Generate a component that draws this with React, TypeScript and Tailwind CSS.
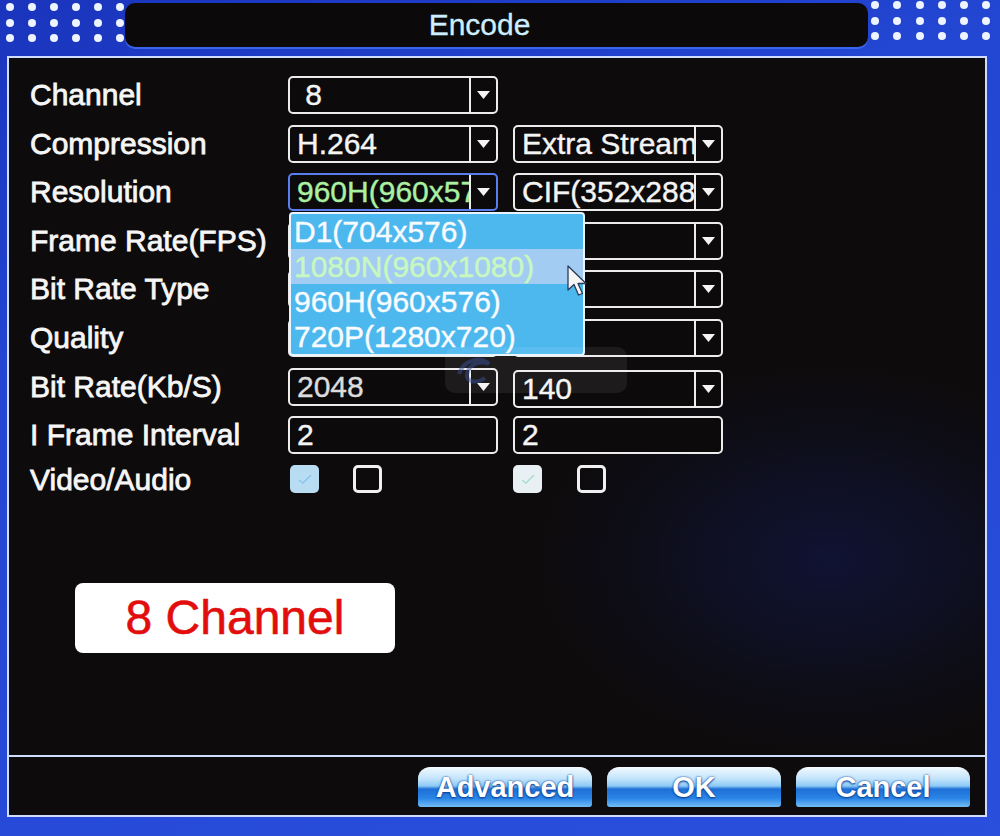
import React from "react";

const labels = [
  "Channel",
  "Compression",
  "Resolution",
  "Frame Rate(FPS)",
  "Bit Rate Type",
  "Quality",
  "Bit Rate(Kb/S)",
  "I Frame Interval",
  "Video/Audio",
];

const resolutions = ["D1(704x576)", "1080N(960x1080)", "960H(960x576)", "720P(1280x720)"];

function Dots({ className = "" }: { className?: string }) {
  return (
    <div className={`grid grid-cols-6 gap-x-[13.6px] gap-y-[7.5px] ${className}`}>
      {Array.from({ length: 18 }).map((_, i) => (
        <span key={i} className="h-[8px] w-[8px] rounded-full bg-[#eef4ff]" />
      ))}
    </div>
  );
}

function Arrow() {
  return (
    <svg width="13" height="8" viewBox="0 0 13 8">
      <path d="M0 0H13L6.5 8Z" fill="#f4f4f4" />
    </svg>
  );
}

function Select({
  value = "",
  text = "text-[#f4f4f4]",
  border = "border-[#ececec]",
}: {
  value?: string;
  text?: string;
  border?: string;
}) {
  return (
    <div className={`flex h-[38px] w-[210px] overflow-hidden rounded-[5px] border-2 ${border} bg-[#0c0a0a]`}>
      <div className={`flex-1 overflow-hidden whitespace-pre pl-[7px] text-[30px] leading-[34px] [-webkit-text-stroke:0.4px_currentColor] ${text}`}>
        {value}
      </div>
      <div className="flex w-[27px] shrink-0 items-center justify-center border-l-2 border-[#ececec]">
        <Arrow />
      </div>
    </div>
  );
}

function Field({ value }: { value: string }) {
  return (
    <div className="h-[38px] w-[210px] overflow-hidden rounded-[5px] border-2 border-[#ececec] bg-[#0c0a0a] pl-[7px] text-[30px] leading-[34px] text-[#f4f4f4] [-webkit-text-stroke:0.4px_currentColor]">
      {value}
    </div>
  );
}

function Check({ fill, tick }: { fill?: string; tick?: string }) {
  if (fill) {
    return (
      <span className={`flex h-[28px] w-[29px] items-center justify-center rounded-[5px] ${fill}`}>
        <svg width="16" height="12" viewBox="0 0 16 12">
          <path d="M2 7L6 10L14 2" fill="none" stroke={tick} strokeWidth="1.4" />
        </svg>
      </span>
    );
  }
  return <span className="h-[28px] w-[29px] rounded-[5px] border-[3px] border-[#f0f0f0]" />;
}

function Button({ children }: { children: React.ReactNode }) {
  return (
    <button className="flex h-[40px] w-[174px] items-center justify-center rounded-t-[12px] rounded-b-[3px] border-t border-[#f4faff] bg-[linear-gradient(180deg,#eef8ff_0%,#c2e3fb_28%,#8ccaf6_46%,#1e6fd6_54%,#2b86e6_78%,#74bdf6_100%)] text-[29px] font-bold leading-none text-white [text-shadow:0_0_2px_#0a3f95,0_1px_2px_#0a3f95]">
      {children}
    </button>
  );
}

function Cursor() {
  return (
    <svg width="24" height="34" viewBox="0 0 24 34">
      <path
        d="M1 1L1 25L7 19.5L11.5 30L15.5 28.5L11 18.5L19 18.5Z"
        fill="#f6f6f6"
        stroke="#2a3a5a"
        strokeWidth="1.3"
        strokeLinejoin="round"
      />
    </svg>
  );
}

export default function App() {
  return (
    <div className="relative h-[836px] w-[1000px] overflow-hidden bg-[linear-gradient(160deg,#1a34bc_0%,#2245d2_30%,#2a4fdc_100%)] font-['Liberation_Sans',Arial,sans-serif] text-white">
      <header className="flex h-[56px] items-start">
        <Dots className="ml-[6px] mt-[3px] w-[119px]" />
        <div className="mt-[3px] flex h-[44px] w-[743px] items-center justify-center rounded-[10px] bg-[#0b0909] pr-[34px] text-[30px] leading-none text-[#cdeeff] shadow-[0_2px_0_#3a66ee] [-webkit-text-stroke:0.3px_#cdeeff]">
          Encode
        </div>
        <Dots className="ml-[3px] mt-[1px] w-[120px]" />
      </header>

      <main className="ml-[7px] flex h-[761px] w-[980px] flex-col border-2 border-[#cfdcfb] bg-[#0d0b0b]">
        <section className="relative flex-1 bg-[radial-gradient(ellipse_30%_28%_at_84%_72%,#101333_0%,rgba(13,11,11,0)_100%)] pl-[21px] pt-[18px]">
          <div className="grid grid-cols-[243px_210px_210px] grid-rows-[repeat(8,38px)_28px] gap-x-[15px] gap-y-[10.6px] text-[30px] leading-none">
            {labels.map((label, i) => (
              <div
                key={label}
                style={{ gridRow: i + 1 }}
                className={`col-start-1 flex ${i === 8 ? "items-start" : "items-center"} whitespace-nowrap text-[#f6f6f6] [-webkit-text-stroke:0.8px_#f6f6f6]`}
              >
                {label}
              </div>
            ))}

            <div className="col-start-2 row-start-1">
              <Select value=" 8" />
            </div>

            <div className="col-start-2 row-start-2">
              <Select value="H.264" />
            </div>
            <div className="col-start-3 row-start-2">
              <Select value="Extra Stream" />
            </div>

            <div className="relative col-start-2 row-start-3">
              <Select value="960H(960x576)" text="text-[#a9f0a2]" border="border-[#5a7ef0]" />
              <ul className="absolute left-[1px] top-[39px] z-10 w-[296px] overflow-hidden rounded-[4px] border-2 border-[#e8f4ff] bg-[#4db8ee] text-[30px] leading-[35px] [-webkit-text-stroke:0.4px_currentColor]">
                {resolutions.map((r, i) => (
                  <li
                    key={r}
                    className={`h-[35px] whitespace-nowrap pl-[3px] ${i === 1 ? "bg-[#a3ccf2] text-[#c8f8c0]" : "text-[#f8fbff]"}`}
                  >
                    {r}
                  </li>
                ))}
              </ul>
              <div className="absolute left-[279px] top-[92px] z-20">
                <Cursor />
              </div>
            </div>
            <div className="col-start-3 row-start-3">
              <Select value="CIF(352x288)" />
            </div>

            <div className="col-start-2 row-start-4">
              <Select />
            </div>
            <div className="col-start-3 row-start-4">
              <Select />
            </div>
            <div className="col-start-2 row-start-5">
              <Select />
            </div>
            <div className="col-start-3 row-start-5">
              <Select />
            </div>
            <div className="col-start-2 row-start-6">
              <Select />
            </div>
            <div className="col-start-3 row-start-6">
              <Select />
            </div>

            <div className="col-start-2 row-start-7">
              <Select value="2048" text="text-[#dcdcdc]" />
            </div>
            <div className="col-start-3 row-start-7 pt-[2px]">
              <Select value="140" />
            </div>

            <div className="col-start-2 row-start-8">
              <Field value="2" />
            </div>
            <div className="col-start-3 row-start-8">
              <Field value="2" />
            </div>

            <div className="col-start-2 row-start-9 flex gap-[34px] pl-[2px]">
              <Check fill="bg-[#b8dcf2]" tick="#8cc4ea" />
              <Check />
            </div>
            <div className="col-start-3 row-start-9 flex gap-[35px]">
              <Check fill="bg-[#e9f0f3]" tick="#a8dccc" />
              <Check />
            </div>
          </div>

          <div className="pointer-events-none absolute left-[436px] top-[289px] z-30 flex h-[46px] w-[182px] items-center gap-2 rounded-[10px] bg-white/[0.07] pl-[10px]">
            <svg width="40" height="32" viewBox="0 0 40 32">
              <path d="M4 20C8 6 26 2 34 10C26 6 14 10 12 20C10 28 22 30 30 24" fill="none" stroke="#3a4f9a" strokeOpacity="0.5" strokeWidth="4" />
            </svg>
          </div>

          <div className="ml-[45px] mt-[90px] flex h-[70px] w-[320px] items-center justify-center rounded-[8px] bg-white text-[48px] leading-none text-[#e20e0e] [-webkit-text-stroke:0.6px_#e20e0e]">
            8 Channel
          </div>
        </section>

        <footer className="flex h-[60px] items-start justify-end gap-[15px] border-t-2 border-[#cfdcfb] pr-[15px] pt-[10px]">
          <Button>Advanced</Button>
          <Button>OK</Button>
          <Button>Cancel</Button>
        </footer>
      </main>
    </div>
  );
}
